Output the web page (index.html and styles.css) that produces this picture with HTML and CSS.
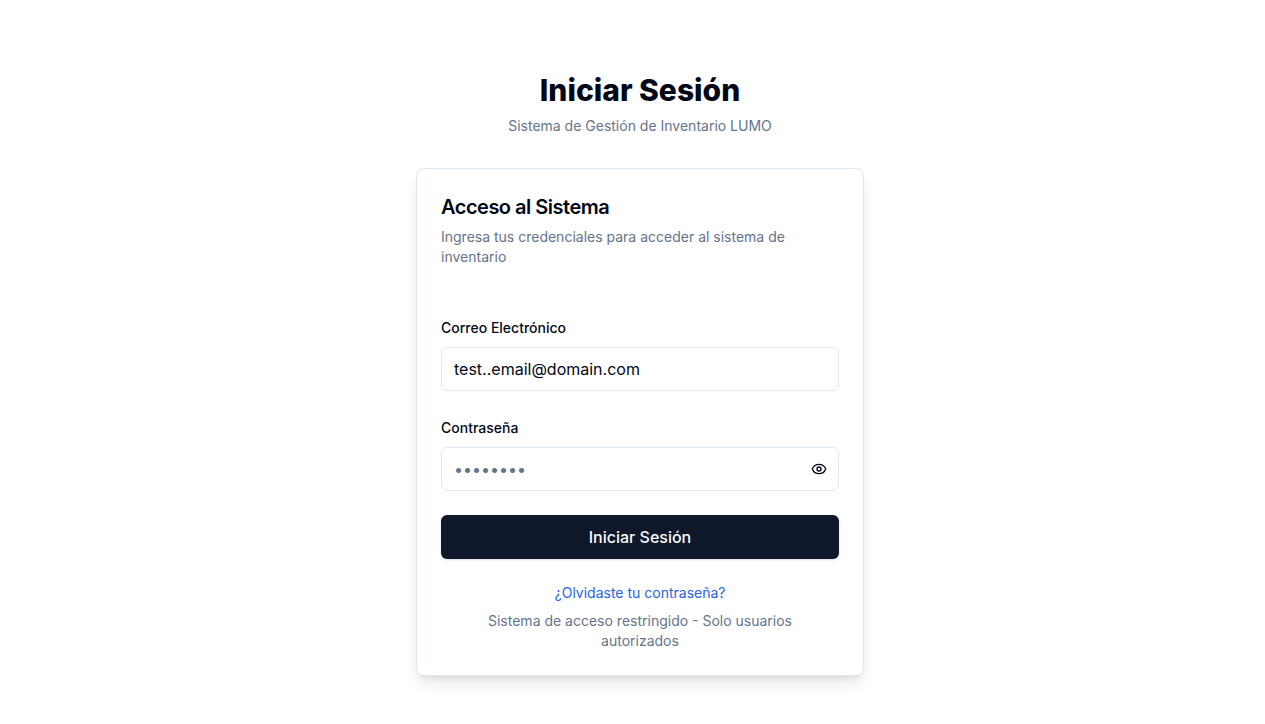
FILE: index.html
```html
<!DOCTYPE html>
<html lang="es">
<head>
<meta charset="utf-8">
<title>Iniciar Sesión</title>
<link rel="stylesheet" href="styles.css">
</head>
<body>
<main class="page">
  <header class="heading">
    <h1 class="title">Iniciar Sesión</h1>
    <p class="subtitle">Sistema de Gestión de Inventario LUMO</p>
  </header>
  <section class="card">
    <div class="card-header">
      <h2 class="card-title">Acceso al Sistema</h2>
      <p class="card-text">Ingresa tus credenciales para acceder al sistema de inventario</p>
    </div>
    <form class="form">
      <div class="field">
        <label class="label" for="email">Correo Electrónico</label>
        <input class="input" id="email" type="text" value="test..email@domain.com">
      </div>
      <div class="field">
        <label class="label" for="password">Contraseña</label>
        <div class="password">
          <input class="input" id="password" type="password" placeholder="••••••••">
          <button class="toggle" type="button" aria-label="Mostrar contraseña">
            <svg class="eye" viewBox="0 0 24 24"><path d="M2.062 12.348a1 1 0 0 1 0-.696 10.75 10.75 0 0 1 19.876 0 1 1 0 0 1 0 .696 10.75 10.75 0 0 1-19.876 0"/><circle cx="12" cy="12" r="3"/></svg>
          </button>
        </div>
      </div>
      <button class="submit" type="button">Iniciar Sesión</button>
    </form>
    <footer class="card-footer">
      <a class="link" href="#">¿Olvidaste tu contraseña?</a>
      <p class="note">Sistema de acceso restringido - Solo usuarios autorizados</p>
    </footer>
  </section>
</main>
</body>
</html>
```
FILE: styles.css
```css
* { box-sizing: border-box; margin: 0; }
body { font-family: Inter, "Liberation Sans", sans-serif; font-size: 16px; line-height: 24px; color: #020817; background: #fff; }
.page { width: 448px; min-height: 720px; margin-left: 416px; padding: 72px 0 44px; }
.heading { text-align: center; }
.title { font-size: 30px; line-height: 36px; font-weight: 800; }
.subtitle { margin-top: 8px; font-size: 14px; line-height: 20px; color: #64748b; }
.card { margin-top: 32px; padding: 24px; border: 1px solid #e2e8f0; border-radius: 8px; background: #fff; box-shadow: 0 10px 15px -3px rgb(0 0 0 / 0.1), 0 4px 6px -4px rgb(0 0 0 / 0.1); }
.card-header { display: flex; flex-direction: column; gap: 6px; }
.card-title { font-size: 20px; line-height: 28px; font-weight: 600; letter-spacing: -0.025em; }
.card-text { font-size: 14px; line-height: 20px; color: #64748b; }
.form { display: flex; flex-direction: column; gap: 24px; margin-top: 48px; }
.field { display: flex; flex-direction: column; gap: 7px; }
.label { padding-top: 1px; font-size: 14px; line-height: 24px; font-weight: 500; }
.input { display: block; width: 100%; height: 44px; padding: 8px 12px; border: 1px solid #e2e8f0; border-radius: 6px; outline: none; background: #fff; color: #020817; font: inherit; }
.input::placeholder { color: #64748b; opacity: 1; }
.password { position: relative; }
.toggle { position: absolute; top: 0; right: 0; display: flex; align-items: center; justify-content: center; width: 40px; height: 44px; padding: 0; border: 0; background: none; color: #020817; }
.eye { width: 16px; height: 16px; fill: none; stroke: currentColor; stroke-width: 2; stroke-linecap: round; stroke-linejoin: round; }
.submit { height: 44px; border: 0; border-radius: 6px; background: #0f172a; color: #f8fafc; font: inherit; font-weight: 500; box-shadow: 0 1px 3px rgb(0 0 0 / 0.1), 0 1px 2px -1px rgb(0 0 0 / 0.1); }
.card-footer { margin-top: 24px; text-align: center; font-size: 14px; line-height: 20px; color: #64748b; }
.link { display: block; color: #2563eb; text-decoration: none; }
.note { margin-top: 8px; padding: 0 24px; }
```
